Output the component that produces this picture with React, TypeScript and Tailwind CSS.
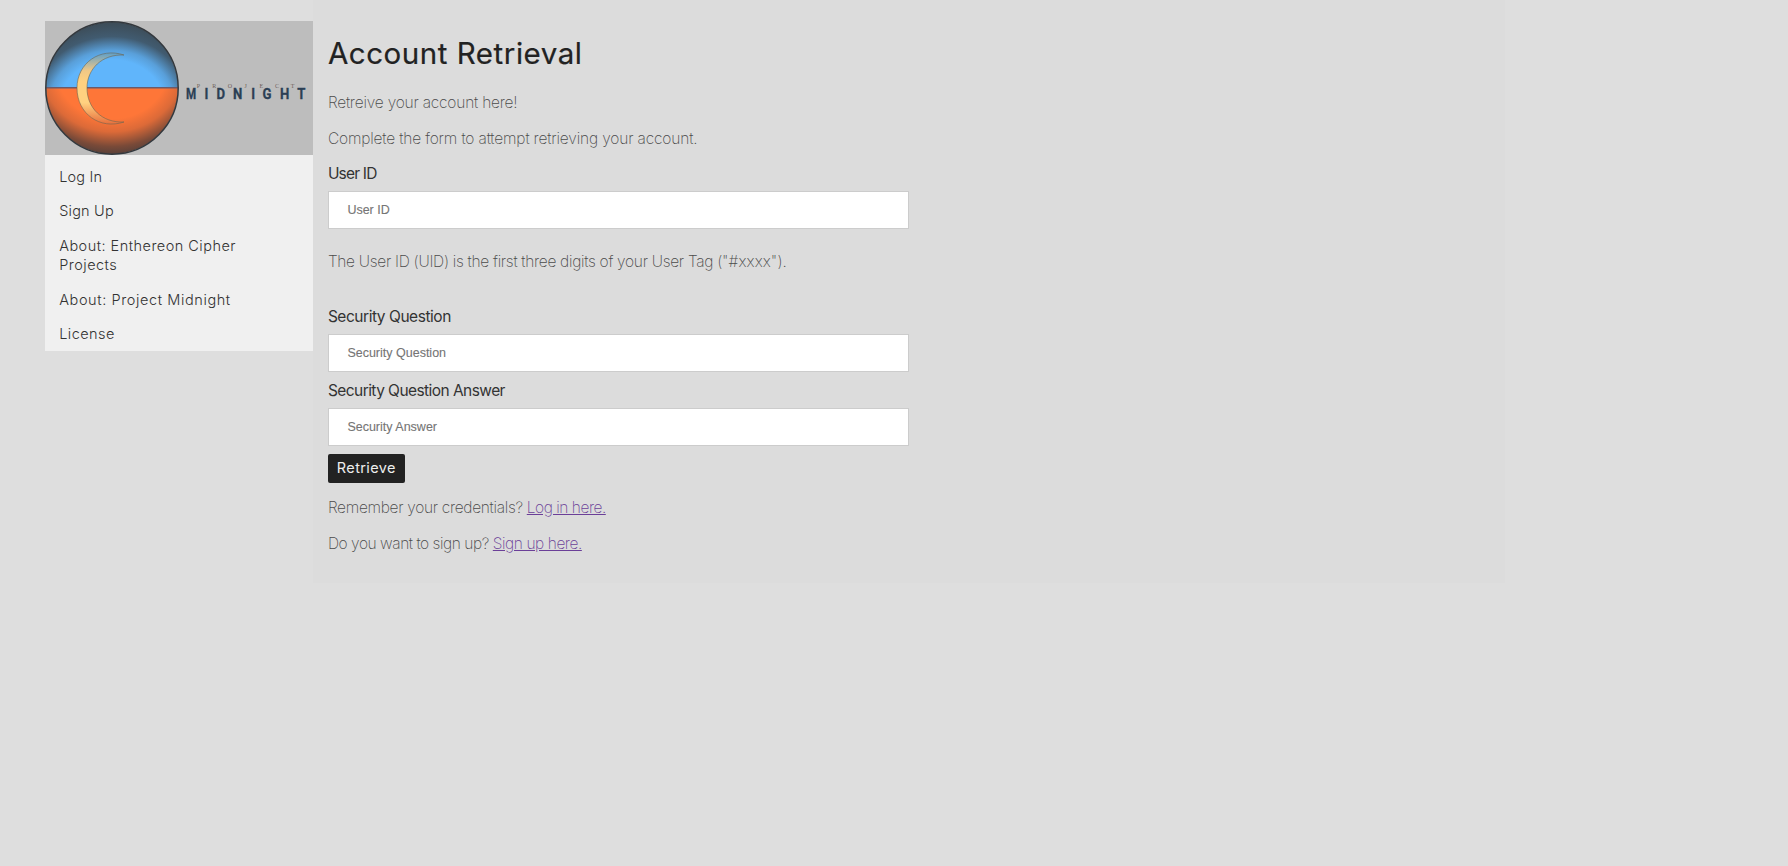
const nav = [
  { label: 'Log In', className: 'tracking-[0.2px]' },
  { label: 'Sign Up', className: 'tracking-[0.2px]' },
  { label: 'About: Enthereon Cipher Projects', className: 'tracking-[0.47px]' },
  { label: 'About: Project Midnight', className: 'tracking-[0.6px]' },
  { label: 'License', className: 'tracking-[0.45px]' },
]

const letterX = [146, 161.5, 175.8, 192.6, 208.3, 222, 239.6, 256.3]

function Logo() {
  return (
    <svg className="block h-[134px] w-[268px] bg-[#bdbdbd]" viewBox="0 0 268 134">
      <defs>
        <clipPath id="disc"><circle cx="67" cy="67" r="66" /></clipPath>
        <radialGradient id="sky" gradientUnits="userSpaceOnUse" cx="67" cy="86" r="86" gradientTransform="translate(67 0) scale(1.12 1) translate(-67 0)">
          <stop offset="0.55" stopColor="#60b5fb" />
          <stop offset="0.66" stopColor="#599fd9" />
          <stop offset="0.82" stopColor="#415b70" />
          <stop offset="1" stopColor="#3c4a54" />
        </radialGradient>
        <radialGradient id="ground" gradientUnits="userSpaceOnUse" cx="67" cy="48" r="86" gradientTransform="translate(67 0) scale(1.12 1) translate(-67 0)">
          <stop offset="0.58" stopColor="#fe7638" />
          <stop offset="0.73" stopColor="#dc6a38" />
          <stop offset="0.9" stopColor="#7a4a38" />
          <stop offset="1" stopColor="#56403a" />
        </radialGradient>
        <linearGradient id="moon" x1="0" y1="0" x2="0" y2="1">
          <stop offset="0" stopColor="#5f9fc8" />
          <stop offset="0.25" stopColor="#f0c886" />
          <stop offset="0.4" stopColor="#ffd180" />
          <stop offset="0.7" stopColor="#ffd180" />
          <stop offset="1" stopColor="#e86f3c" />
        </linearGradient>
      </defs>
      <g clipPath="url(#disc)">
        <rect width="134" height="67" fill="url(#sky)" />
        <rect y="67" width="134" height="67" fill="url(#ground)" />
        <path d="M0 66.8H134" stroke="#6d5a68" strokeWidth="1.4" />
      </g>
      <circle cx="67" cy="67" r="66.2" fill="none" stroke="#33383d" strokeWidth="1.5" />
      <path d="M79 34C55 26 32 42 32 67C32 93 55 109 79 101C57 102 42 87 42 67C42 48 57 33 79 34Z" fill="url(#moon)" stroke="#6b6450" strokeWidth="0.6" />
      <g fill="#6f625a" fontFamily="Liberation Serif, serif" fontSize="6" textAnchor="middle">
        {'PROJECT'.split('').map((c, i) => <text key={i} x={153.5 + i * 15.7} y="67.3">{c}</text>)}
      </g>
      <g fill="#2b3f55" stroke="#2b3f55" strokeWidth="0.3" fontFamily="Roboto, sans-serif" fontWeight="700" fontSize="15.5" textAnchor="middle">
        {'MIDNIGHT'.split('').map((c, i) => (
          <text key={i} transform={`translate(${letterX[i]} 78.3) scale(${i === 0 ? 0.75 : 0.85} 1)`}>{c}</text>
        ))}
      </g>
    </svg>
  )
}

const input = 'block h-[38px] w-[581px] border border-[#cccccc] bg-white pr-[18px] pb-[1px] pl-[18.5px] font-["Liberation_Sans",sans-serif] text-[12.5px] outline-none placeholder:text-[#757575] placeholder:[-webkit-text-stroke:0.1px_#757575]'
const text = 'text-[15.5px] leading-[22px] font-extralight text-[#4a4a4a]'
const label = 'block text-[15.5px] leading-[22px] text-[#333333]'
const link = 'text-[#6b3f98] underline'

export default function App() {
  return (
    <div className='min-h-screen bg-[#dedede] pt-[21px] pl-[44.7px] font-["Inter",sans-serif]'>
      <div className="flex items-start">
        <aside className="w-[268.2px] shrink-0 bg-[#f0f0f0]">
          <Logo />
          <nav className="flex flex-col gap-[15px] pt-[11.5px] pr-[50px] pb-[7.5px] pl-[14.5px] text-[14.5px] leading-[19.5px] font-light text-[#333333]">
            {nav.map((item) => (
              <a key={item.label} className={item.className}>{item.label}</a>
            ))}
          </nav>
        </aside>
        <main className="-mt-[21px] h-[583px] w-[1192px] bg-[#dcdcdc] px-[15px] pt-[33px]">
          <h1 className="text-[29.5px] leading-[41px] tracking-[0.54px] text-[#222222] [-webkit-text-stroke:0.2px_#222222]">Account Retrieval</h1>
          <p className={`${text} mt-[18px] tracking-[-0.2px]`}>Retreive your account here!</p>
          <p className={`${text} mt-[14px] tracking-[-0.15px]`}>Complete the form to attempt retrieving your account.</p>
          <label className={`${label} mt-[13px] tracking-[-0.8px]`}>User ID</label>
          <input className={`${input} mt-[6px]`} placeholder="User ID" />
          <p className={`${text} mt-[22px] tracking-[-0.29px]`}>The User ID (UID) is the first three digits of your User Tag (<span className="tracking-[0.1px]">"#xxxx").</span></p>
          <label className={`${label} mt-[33px] tracking-[-0.46px]`}>Security Question</label>
          <input className={`${input} mt-[6px]`} placeholder="Security Question" />
          <label className={`${label} mt-[8px] tracking-[-0.56px]`}>Security Question Answer</label>
          <input className={`${input} mt-[6px]`} placeholder="Security Answer" />
          <button className="mt-[8px] block h-[29px] w-[77px] rounded-[2px] bg-[#222222] pb-[1px] text-[14.5px] tracking-[0.4px] text-[#eeeeee]">Retrieve</button>
          <p className={`${text} mt-[14px] tracking-[-0.3px]`}>Remember your credentials? <a className={`${link} tracking-[-0.46px]`}>Log in here.</a></p>
          <p className={`${text} mt-[14px] tracking-[-0.44px]`}>Do you want to sign up? <a className={`${link} tracking-[-0.43px]`}>Sign up here.</a></p>
        </main>
      </div>
    </div>
  )
}
